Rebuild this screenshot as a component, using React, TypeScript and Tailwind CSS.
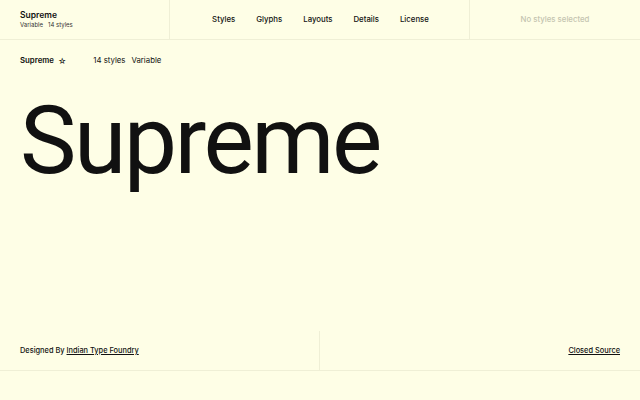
export default function App() {
  const nav = ['Styles', 'Glyphs', 'Layouts', 'Details', 'License']
  return (
    <div
      className="flex h-[400px] w-[640px] flex-col bg-[#fefee6] text-[#111111]"
      style={{ fontFamily: 'Inter, "Liberation Sans", sans-serif' }}
    >
      <header className="flex h-[40px] border-b border-[#efefd6]">
        <div className="flex w-[170px] flex-col justify-center border-r border-[#efefd6] pl-5">
          <div className="text-[8.5px] font-semibold leading-[11px]">Supreme</div>
          <div className="flex gap-[5px] text-[6px] leading-[8px] text-[#333]">
            <span>Variable</span>
            <span>14 styles</span>
          </div>
        </div>
        <nav className="flex w-[300px] items-center justify-center gap-[21px] border-r border-[#efefd6] pl-[2px] text-[7.8px] font-medium">
          {nav.map((n) => (
            <span key={n}>{n}</span>
          ))}
        </nav>
        <div className="flex flex-1 items-center justify-center text-[7.8px] font-medium text-[#c4c4b0]">
          No styles selected
        </div>
      </header>

      <div className="flex h-[42px] items-center px-5 text-[7.8px]">
        <span className="font-semibold">Supreme</span>
        <span className="ml-[4px] text-[8px] leading-none">☆</span>
        <span className="ml-[27px]">14 styles</span>
        <span className="ml-[6px]">Variable</span>
      </div>

      <div
        className="pl-[20px] pt-[4px] text-[95px] font-normal leading-[110px] tracking-[-2.5px]"
        style={{ fontFamily: 'Roboto, "Liberation Sans", sans-serif' }}
      >
        Supreme
      </div>

      <div className="flex-1" />

      <footer className="flex h-[40px] border-b border-[#efefd6] text-[7.4px] font-medium">
        <div className="flex w-[320px] items-center border-r border-[#efefd6] pl-5">
          Designed By&nbsp;<span className="underline">Indian Type Foundry</span>
        </div>
        <div className="flex flex-1 items-center justify-end pr-5">
          <span className="underline">Closed Source</span>
        </div>
      </footer>
      <div className="h-[29px]" />
    </div>
  )
}
